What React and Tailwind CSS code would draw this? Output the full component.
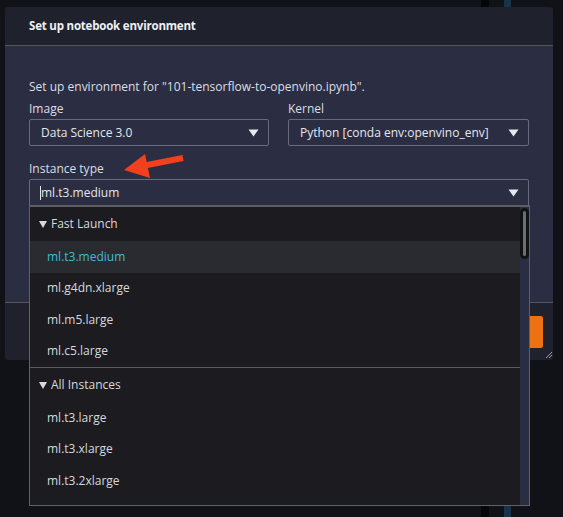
import React from 'react';

const FONT = { fontFamily: '"Open Sans", "Noto Sans", Arial, sans-serif' };

const fastLaunch = ['ml.t3.medium', 'ml.g4dn.xlarge', 'ml.m5.large', 'ml.c5.large'];
const allInstances = ['ml.t3.large', 'ml.t3.xlarge', 'ml.t3.2xlarge'];

function Caret() {
  return (
    <svg width="11" height="8" viewBox="0 0 11 8" className="shrink-0">
      <path d="M0.5 0.5 H10.5 L5.5 7.5 Z" fill="#e6e8ee" />
    </svg>
  );
}

function Select({ value }) {
  return (
    <div className="flex items-center justify-between h-[27px] pl-[11px] pr-[9px] border border-[#676b7b] rounded-[2px] text-[#e4e6ec]">
      <span>{value}</span>
      <Caret />
    </div>
  );
}

function GroupHeader({ label }) {
  return (
    <div className="flex items-center h-[34px] pl-[9px] gap-[4px] text-[#d8d9de]">
      <svg width="8" height="7" viewBox="0 0 8 7">
        <path d="M0 0 H8 L4 7 Z" fill="#d8d9de" />
      </svg>
      <span>{label}</span>
    </div>
  );
}

function Option({ label, active }) {
  return (
    <div
      className={`flex items-center h-[31.5px] pl-[17px] ${active ? 'bg-[#2a2b31] text-[#45b8d6]' : 'text-[#d8d9de]'}`}
    >
      {label}
    </div>
  );
}

export default function App() {
  return (
    <div className="relative w-[563px] h-[517px] bg-[#111217] overflow-hidden text-[12px] leading-[16px]" style={FONT}>
      {/* app chrome peeking out behind the modal */}
      <div className="absolute left-[481px] top-0 w-[8px] h-full bg-[#060607]" />
      <div className="absolute left-[504px] top-0 w-[7px] h-full bg-[#17344b]" />

      <div className="relative ml-[5px] mt-[7px] w-[548px] h-[353px] flex flex-col rounded-[3px] overflow-visible">
        {/* header */}
        <div className="h-[39px] flex items-center px-[24px] bg-[#1f222d] rounded-t-[3px] border-b border-[#56575e]">
          <span className="font-bold text-[11.5px] tracking-[-0.2px] text-[#eef0f4]">Set up notebook environment</span>
        </div>

        {/* body */}
        <div className="flex-1 bg-[#2b2e42] px-[24px] pt-[33px] border-b border-[#56575e]">
          <p className="text-[#dcdee5]">Set up environment for "101-tensorflow-to-openvino.ipynb".</p>

          <div className="grid grid-cols-[240px_241px] gap-x-[19px] mt-[6px]">
            <div>
              <div className="text-[#dcdee5] mb-[2px]">Image</div>
              <Select value="Data Science 3.0" />
            </div>
            <div>
              <div className="text-[#dcdee5] mb-[2px]">Kernel</div>
              <Select value="Python [conda env:openvino_env]" />
            </div>
          </div>

          <div className="mt-[15px] w-[500px]">
            <div className="text-[#dcdee5] mb-[2px]">Instance type</div>
            <div className="relative">
              <div className="flex items-center justify-between h-[27px] pl-[11px] pr-[9px] border border-[#676b7b] rounded-t-[2px] text-[#e4e6ec]">
                <span className="relative">
                  <span className="absolute left-[-1px] top-[1px] w-px h-[14px] bg-[#e4e6ec]" />
                  ml.t3.medium
                </span>
                <Caret />
              </div>

              {/* listbox */}
              <div className="absolute left-0 top-[26px] z-10 w-[501px] h-[301px] flex border border-[#5f6068] border-t-2 border-t-[#5d5e62] bg-[#1b1b20]">
                <div className="flex-1 overflow-hidden">
                  <GroupHeader label="Fast Launch" />
                  {fastLaunch.map((o, i) => (
                    <Option key={o} label={o} active={i === 0} />
                  ))}
                  <div className="h-px bg-[#5a5b61]" />
                  <GroupHeader label="All Instances" />
                  {allInstances.map(o => (
                    <Option key={o} label={o} />
                  ))}
                </div>
                <div className="w-[9px] bg-[#2b2e42] flex justify-center pt-[1px]">
                  <div className="w-[9px] h-[51px] rounded-full bg-[#111216] flex justify-center py-[3px]">
                    <div className="w-[3px] h-full rounded-full bg-[#6d6e72]" />
                  </div>
                </div>
              </div>
            </div>
          </div>
        </div>

        {/* footer */}
        <div className="relative h-[57px] bg-[#1f222d] rounded-b-[3px] flex items-center justify-end pr-[10px]">
          <div className="w-[70px] h-[32px] bg-[#ec7211] rounded-[2px]" />
          <svg width="7" height="7" viewBox="0 0 7 7" className="absolute right-[1px] bottom-[2px]">
            <path d="M1 7 L7 1 M4 7 L7 4" stroke="#9a9ca6" strokeWidth="1" />
          </svg>
        </div>

        {/* annotation arrow */}
        <svg width="563" height="517" className="absolute left-[-5px] top-[-7px] pointer-events-none">
          <line x1="183" y1="158" x2="142" y2="166" stroke="#f2401f" strokeWidth="6" />
          <path d="M124 170 L145 154 L150 178 Z" fill="#f2401f" />
        </svg>
      </div>
    </div>
  );
}
